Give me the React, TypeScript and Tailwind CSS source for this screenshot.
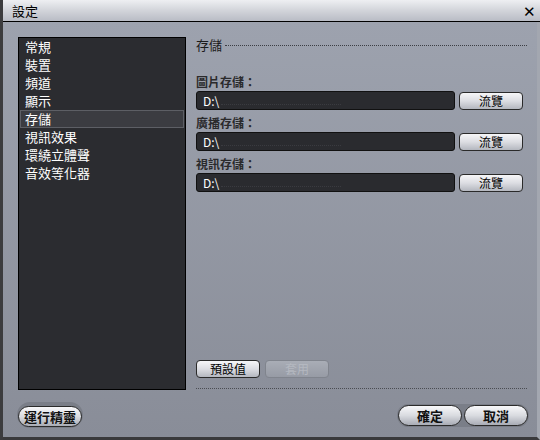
import React from "react";

const font = { fontFamily: '"Noto Sans CJK TC", "Noto Sans CJK SC", "Liberation Sans", sans-serif' };

const items = ["常規", "裝置", "頻道", "顯示", "存儲", "視訊效果", "環繞立體聲", "音效等化器"];
const paths = ["圖片存儲：", "廣播存儲：", "視訊存儲："];

function Btn({ label, disabled }: { label: string; disabled?: boolean }) {
  return (
    <button
      className={
        disabled
          ? "w-[64px] h-[18px] rounded-[4px] border border-[#80848d] bg-gradient-to-b from-[#a9adb6] to-[#979ba5] text-[12px] leading-none text-[#b4b8c0]"
          : "w-[64px] h-[18px] rounded-[4px] border border-[#2a2a2a] bg-gradient-to-b from-[#f6f6f8] via-[#dcdde2] to-[#b4b7bf] text-[12px] leading-none text-black"
      }
    >
      {label}
    </button>
  );
}

function Pill({ label }: { label: string }) {
  return (
    <div className="rounded-full bg-[#7a7e88] p-[1px]">
      <button className="w-[64px] h-[21px] rounded-full border border-[#2b2b2b] bg-gradient-to-b from-[#f8f8fa] via-[#d9dbe0] to-[#a9acb5] text-[13px] font-bold leading-none text-[#111]">
        {label}
      </button>
    </div>
  );
}

export default function App() {
  return (
    <div className="w-[540px] h-[440px] flex flex-col bg-[#3c3c3e] pl-[3px]" style={font}>
      <div className="h-[22px] flex items-center justify-between border-b border-black bg-gradient-to-b from-[#eeeff2] via-[#d2d4da] to-[#b9bcc5] pl-[9px] pr-[4px]">
        <span className="text-[13px] text-black">設定</span>
        <span className="text-[15px] leading-none text-black">✕</span>
      </div>
      <div className="flex-1 flex flex-col bg-gradient-to-b from-[#9da2ae] to-[#898d98] border-r-[3px] border-r-[#a3a7b0] border-b-[3px] border-b-[#3a3a3c]">
        <div className="flex pt-[15px] pl-[15px] h-[368px]">
          <div className="w-[168px] h-[353px] bg-[#2b2c30] border border-black px-[1px]">
            {items.map((it) => (
              <div
                key={it}
                className={
                  it === "存儲"
                    ? "h-[18px] leading-[16px] pl-[4px] text-[13px] text-white bg-[#3b3c41] border border-[#5d5f65]"
                    : "h-[18px] leading-[18px] pl-[5px] text-[13px] text-white"
                }
              >
                {it}
              </div>
            ))}
          </div>
          <div className="ml-[10px] w-[331px] flex flex-col h-[353px]">
            <div className="flex items-center gap-[3px] h-[16px]">
              <span className="text-[13px] text-[#1c1c1c]">存儲</span>
              <div className="flex-1 border-t border-dotted border-[#3c3e44]" />
            </div>
            <div className="flex flex-col mt-[20px] gap-[4px]">
              {paths.map((p) => (
                <div key={p} className="flex flex-col">
                  <div className="h-[18px] leading-[18px] text-[12px] font-bold text-[#2a2a2c]">{p}</div>
                  <div className="flex items-center gap-[4px]">
                    <div className="w-[259px] h-[19px] rounded-[3px] border border-[#111] bg-[#2a2b2f] flex items-center pl-[6px]">
                      <span className="text-[12px] leading-none text-white">D:\</span>
                      <div className="ml-[2px] mt-[8px] w-[120px] border-t border-dotted border-[#3a3b40]" />
                    </div>
                    <Btn label="流覽" />
                  </div>
                </div>
              ))}
            </div>
            <div className="mt-auto flex gap-[5px] mb-[10px]">
              <Btn label="預設值" />
              <Btn label="套用" disabled />
            </div>
            <div className="border-t border-dotted border-[#4a4c52] mb-[1px]" />
          </div>
        </div>
        <div className="flex items-center justify-between pl-[14px] pr-[8px] mt-[12px]">
          <Pill label="運行精靈" />
          <div className="flex gap-[2px] rounded-full bg-[#7a7e88] p-[1px]">
            <button className="w-[64px] h-[21px] rounded-full border border-[#2b2b2b] bg-gradient-to-b from-[#f8f8fa] via-[#d9dbe0] to-[#a9acb5] text-[13px] font-bold leading-none text-[#111]">確定</button>
            <button className="w-[64px] h-[21px] rounded-full border border-[#2b2b2b] bg-gradient-to-b from-[#f8f8fa] via-[#d9dbe0] to-[#a9acb5] text-[13px] font-bold leading-none text-[#111]">取消</button>
          </div>
        </div>
      </div>
    </div>
  );
}
